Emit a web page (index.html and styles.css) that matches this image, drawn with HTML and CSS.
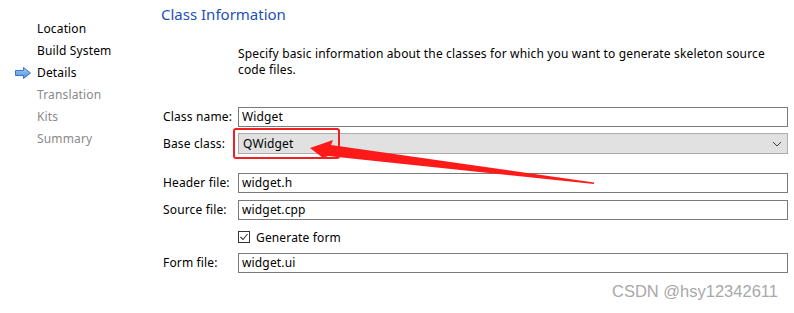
FILE: index.html
```html
<!DOCTYPE html>
<html lang="en">
<head>
  <meta charset="UTF-8" />
  <title>Class Information</title>
  <link rel="stylesheet" href="styles.css">
</head>
<body>
  <div class="wizard">
    <ul class="steps">
      <li class="done">Location</li>
      <li class="done">Build System</li>
      <li class="current">
        <svg class="step-arrow" width="16" height="12" viewBox="0 0 16 12">
          <defs>
            <linearGradient id="arrowFill" x1="0" y1="0" x2="0" y2="1">
              <stop offset="0" stop-color="#a9cdf5"/>
              <stop offset="1" stop-color="#4a8ee0"/>
            </linearGradient>
          </defs>
          <path d="M0.5 3.5 H8.5 V0.5 L15.5 6 L8.5 11.5 V8.5 H0.5 Z" fill="url(#arrowFill)" stroke="#3a76c8" stroke-width="1"/>
        </svg>
        Details
      </li>
      <li>Translation</li>
      <li>Kits</li>
      <li>Summary</li>
    </ul>

    <div class="page">
      <h1>Class Information</h1>
      <p class="intro">Specify basic information about the classes for which you want to generate skeleton source<br>code files.</p>

      <div class="form">
        <label class="row-class">Class name:</label>
        <div class="field row-class">Widget</div>

        <label class="row-base">Base class:</label>
        <div class="combo row-base">
          <span>QWidget</span>
          <svg width="10" height="6" viewBox="0 0 10 6"><path d="M1 1 L5 5 L9 1" fill="none" stroke="#404040" stroke-width="1"/></svg>
        </div>

        <label class="row-header">Header file:</label>
        <div class="field row-header">widget.h</div>

        <label class="row-source">Source file:</label>
        <div class="field row-source">widget.cpp</div>

        <div class="row-check"></div>
        <div class="check row-check">
          <span class="box">
            <svg width="10" height="10" viewBox="0 0 10 10"><path d="M1.5 5 L4 7.5 L8.5 2" fill="none" stroke="#333" stroke-width="1.1"/></svg>
          </span>
          Generate form
        </div>

        <label class="row-form">Form file:</label>
        <div class="field row-form">widget.ui</div>
      </div>
    </div>
  </div>

  <!-- annotation drawn over the dialog -->
  <div class="mark-box"></div>
  <svg class="mark-arrow" width="794" height="313" viewBox="0 0 794 313">
    <path d="M310 148 L333 140 L331 145 L594 182.5 L594 184 L328 156 L323 158 Z" fill="#ff1a1a"/>
  </svg>

  <div class="watermark">CSDN @hsy12342611</div>
</body>
</html>
```

FILE: styles.css
```css
body {
  margin: 0;
  background: #ffffff;
  font-family: "Noto Sans", "Open Sans", sans-serif;
  font-size: 12px;
  letter-spacing: 0.15px;
  color: #000000;
  width: 794px;
  height: 313px;
  overflow: hidden;
  position: relative;
}

.wizard {
  display: flex;
}

.steps {
  list-style: none;
  margin: 0;
  padding: 20px 0 0 37px;
  width: 124px;
}

.steps li {
  height: 22px;
  line-height: 18px;
  color: #8a8a8a;
  position: relative;
}

.steps li.done,
.steps li.current {
  color: #000000;
}

.step-arrow {
  position: absolute;
  left: -22px;
  top: 3px;
}

.page {
  flex: 1;
  padding-right: 6px;
}

h1 {
  margin: 4px 0 0 0;
  font-size: 15px;
  font-weight: normal;
  letter-spacing: 0;
  color: #1c4fb8;
  line-height: 20px;
}

.intro {
  margin: 22px 0 0 77px;
  line-height: 16px;
}

.form {
  display: grid;
  grid-template-columns: 75px 1fr;
  margin: 29px 0 0 2px;
  align-items: center;
}

.form label {
  line-height: 18px;
}

.field {
  height: 18px;
  line-height: 18px;
  border: 1px solid #7a7a7a;
  padding: 0 3px;
}

.combo {
  height: 19px;
  border: 1px solid #adadad;
  background: #e1e1e1;
  padding: 0 5px 0 4px;
  display: flex;
  justify-content: space-between;
  align-items: center;
}

.row-base { margin-top: 6px; }
.row-header { margin-top: 19px; }
.row-source { margin-top: 7px; }
.row-check { margin-top: 10px; }
.row-form { margin-top: 9px; }

.check {
  display: flex;
  align-items: center;
  gap: 6px;
  height: 14px;
}

.box {
  width: 10px;
  height: 10px;
  border: 1px solid #333333;
  display: flex;
  align-items: center;
  justify-content: center;
}

.mark-box {
  position: absolute;
  left: 233px;
  top: 128px;
  width: 103px;
  height: 27px;
  border: 2px solid #f02020;
  border-radius: 3px;
}

.mark-arrow {
  position: absolute;
  left: 0;
  top: 0;
}

.watermark {
  position: absolute;
  left: 612px;
  top: 282px;
  font-family: "Liberation Sans", Arial, sans-serif;
  font-size: 16.5px;
  letter-spacing: 0;
  color: #a8a8a8;
}
```
